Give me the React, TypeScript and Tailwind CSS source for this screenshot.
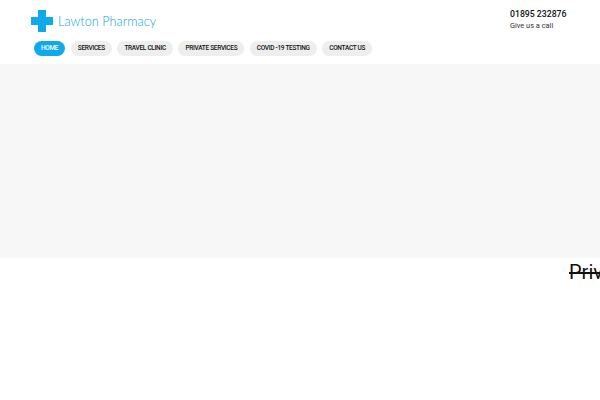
const NAV_ITEMS = ['SERVICES', 'TRAVEL CLINIC', 'PRIVATE SERVICES', 'COVID -19 TESTING', 'CONTACT US']

function Logo() {
  return (
    <div className="flex items-center">
      <svg width="22" height="22" viewBox="0 0 22 22" className="block">
        <path d="M7 0h8v7h7v8h-7v7H7v-7H0V7h7z" fill="#0eaaea" />
      </svg>
      <span className="ml-[5px] text-[12.75px] leading-[22px] font-light text-[#0fa3dc] font-['Lato',sans-serif]">
        Lawton Pharmacy
      </span>
    </div>
  )
}

export default function App() {
  return (
    <div className="w-[600px] h-[400px] overflow-hidden bg-white font-['Roboto',sans-serif]">
      <header className="h-[64px] flex justify-between">
        <div className="pt-[10px] pl-[31px]">
          <Logo />
          <nav className="flex gap-[5.5px] mt-[9px] ml-[3px]">
            <a className="h-[15px] px-[7px] rounded-full bg-[#0eaaea] text-white text-[6.5px] tracking-[-0.3px] leading-[15px] font-medium">HOME</a>
            {NAV_ITEMS.map((item) => (
              <a key={item} className="h-[15px] px-[7px] rounded-full bg-[#eeeeee] text-[#111] text-[6.5px] tracking-[-0.3px] leading-[15px] font-medium">
                {item}
              </a>
            ))}
          </nav>
        </div>
        <div className="w-[90px] pt-[9px]">
          <div className="text-[8.7px] leading-[11px] font-medium text-[#111]">01895 232876</div>
          <div className="text-[7.4px] leading-[11px] text-[#333]">Give us a call</div>
        </div>
      </header>
      <div className="h-[194px] bg-[#f7f7f7]" />
      <div className="pl-[569px] pt-[2px] whitespace-nowrap text-[20px] leading-[24px] text-[#111] line-through">
        Private Services
      </div>
    </div>
  )
}
